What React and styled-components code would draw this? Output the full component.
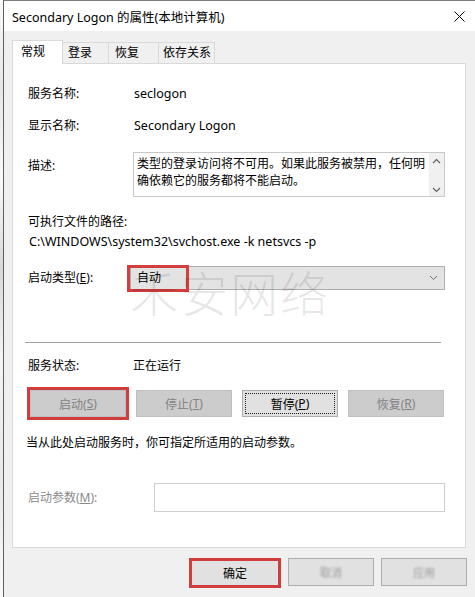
import React from 'react';
import styled, { createGlobalStyle } from 'styled-components';

const Global = createGlobalStyle`
  html, body { margin: 0; padding: 0; background: #fff; }
  body {
    font-family: "Noto Sans", "Noto Sans CJK SC", sans-serif;
    font-size: 12px;
    color: #000;
  }
  * { box-sizing: border-box; }
`;

const Screen = styled.div`
  width: 475px;
  height: 597px;
  overflow: hidden;
  display: flex;
  background: #fff;
`;

const Backdrop = styled.div`
  width: 3px;
  background: linear-gradient(180deg, #fafafa 0%, #e6e6e6 15%, #fafafa 30%, #d8d8d8 45%, #f4f4f4 60%, #e8e8e8 80%, #fafafa 100%);
`;

const Window = styled.div`
  flex: 1;
  display: flex;
  flex-direction: column;
  border-left: 1px solid #5e5e5e;
  border-top: 1px solid #7c7c7c;
  background: #f0f0f0;
`;

const TitleBar = styled.div`
  height: 30px;
  background: #fff;
  display: flex;
  align-items: center;
  justify-content: space-between;
  padding: 0 10px 0 8px;
  font-size: 12.5px;
  white-space: nowrap;
`;

const CloseIcon = styled.svg`
  width: 11px;
  height: 11px;
`;

const Body = styled.div`
  flex: 1;
  display: flex;
  flex-direction: column;
  padding: 9px 9px 0 8px;
  position: relative;
`;

const TabBar = styled.div`
  display: flex;
  align-items: flex-end;
  height: 24px;
  margin-bottom: -1px;
  position: relative;
  z-index: 1;
`;

const Tab = styled.div`
  width: ${p => p.$w}px;
  padding-left: ${p => p.$pl}px;
  height: ${p => (p.$active ? 24 : 22)}px;
  line-height: ${p => (p.$active ? 21 : 20)}px;
  background: ${p => (p.$active ? '#fff' : '#f0f0f0')};
  border: 1px solid #d9d9d9;
  border-bottom: ${p => (p.$active ? 'none' : '1px solid #d9d9d9')};
  margin-left: -1px;
  white-space: nowrap;
  &:first-child { margin-left: 0; }
`;

const Panel = styled.div`
  height: 485px;
  background: #fff;
  border: 1px solid #d9d9d9;
  padding: 22px 20px 0 15px;
  display: flex;
  flex-direction: column;
  position: relative;
`;

const Row = styled.div`
  display: grid;
  grid-template-columns: ${p => p.$labelW || 105}px 1fr;
  align-items: ${p => (p.$top ? 'start' : 'center')};
  margin-top: ${p => p.$mt || 0}px;
  min-height: 16px;
  line-height: 16px;
  white-space: nowrap;
`;

const Label = styled.div`
  color: ${p => (p.$disabled ? '#8a8a8a' : '#000')};
  padding-top: ${p => p.$pt || 0}px;
`;

const Text = styled.div`
  margin-top: ${p => p.$mt || 0}px;
  margin-left: ${p => p.$ml || 0}px;
  line-height: 16px;
  white-space: nowrap;
  font-size: ${p => (p.$latin ? '12.5px' : '12px')};
`;

const DescBox = styled.div`
  height: 45px;
  border: 1px solid #c8c8c8;
  display: flex;
`;

const DescText = styled.div`
  flex: 1;
  padding: 2px 0 0 3px;
  line-height: 17px;
  white-space: nowrap;
`;

const ScrollBar = styled.div`
  width: 15px;
  background: #f0f0f0;
  display: flex;
  flex-direction: column;
  justify-content: space-between;
  align-items: center;
  padding: 5px 0 3px;
`;

const Arrow = styled.svg`
  width: 9px;
  height: 6px;
`;

const Dropdown = styled.div`
  position: relative;
  height: 24px;
  background: #e3e3e3;
  border: 1px solid #adadad;
  display: flex;
  align-items: center;
  justify-content: space-between;
  padding: 0 6px 0 6px;
`;

const RedBox = styled.span`
  position: absolute;
  left: -4px;
  top: -2px;
  width: 62px;
  height: 27px;
  border: 3px solid #d33e3e;
`;

const Chevron = styled.svg`
  width: 9px;
  height: 6px;
`;

const Separator = styled.div`
  height: 1px;
  background: #a0a0a0;
  margin: ${p => p.$mt}px 4px 0 -3px;
`;

const ButtonGrid = styled.div`
  display: grid;
  grid-template-columns: repeat(4, 96px);
  column-gap: 10px;
  margin: 16px 0 0 2px;
`;

const Button = styled.div`
  height: ${p => p.$h || 27}px;
  width: ${p => (p.$w ? p.$w + 'px' : 'auto')};
  display: flex;
  align-items: center;
  justify-content: center;
  position: relative;
  white-space: nowrap;
  background: ${p => (p.$disabled ? '#cccccc' : '#e1e1e1')};
  border: ${p => (p.$red ? '3px solid #d13c3c' : p.$disabled ? '1px solid #bfbfbf' : '1px solid #adadad')};
  color: ${p => (p.$disabled ? '#838383' : '#000')};
  box-shadow: ${p => (p.$outerRed ? '0 0 0 3px #d13c3c' : 'none')};
  ${p => p.$focus && `
    &::after {
      content: '';
      position: absolute;
      inset: 2px;
      border: 1px dotted #222;
    }
  `}
`;

const Blurred = styled.span`
  color: #9a9a9a;
  filter: blur(0.8px);
  font-size: 11px;
`;

const ParamInput = styled.div`
  height: 29px;
  border: 1px solid #cfcfcf;
  background: #fff;
`;

const Watermark = styled.div`
  position: absolute;
  left: 117px;
  top: 203px;
  font-family: "Noto Sans CJK SC", sans-serif;
  font-weight: 300;
  font-size: 48px;
  line-height: 48px;
  letter-spacing: 2px;
  color: rgba(0, 0, 0, 0.11);
  pointer-events: none;
  white-space: nowrap;
`;

const BottomBar = styled.div`
  display: flex;
  justify-content: flex-end;
  gap: 7px;
  padding-top: 10px;
  margin-right: -1px;
`;

export default function App() {
  return (
    <>
      <Global />
      <Screen>
        <Backdrop />
        <Window>
          <TitleBar>
            <span>Secondary Logon 的属性(本地计算机)</span>
            <CloseIcon viewBox="0 0 11 11">
              <path d="M0.5 0.5 L10.5 10.5 M10.5 0.5 L0.5 10.5" stroke="#000" strokeWidth="1" fill="none" />
            </CloseIcon>
          </TitleBar>
          <Body>
            <TabBar>
              <Tab $active $w={51} $pl={8}>常规</Tab>
              <Tab $w={47} $pl={5}>登录</Tab>
              <Tab $w={51} $pl={6}>恢复</Tab>
              <Tab $w={57} $pl={4}>依存关系</Tab>
            </TabBar>
            <Panel>
              <Row>
                <Label>服务名称:</Label>
                <Text $ml={1} $latin>seclogon</Text>
              </Row>
              <Row $mt={16}>
                <Label>显示名称:</Label>
                <Text $ml={1} $latin>Secondary Logon</Text>
              </Row>
              <Row $mt={18} $top>
                <Label $pt={6}>描述:</Label>
                <DescBox>
                  <DescText>
                    类型的登录访问将不可用。如果此服务被禁用，任何明
                    <br />
                    确依赖它的服务都将不能启动。
                  </DescText>
                  <ScrollBar>
                    <Arrow viewBox="0 0 9 6">
                      <path d="M1 5 L4.5 1.5 L8 5" stroke="#606060" strokeWidth="1.2" fill="none" />
                    </Arrow>
                    <Arrow viewBox="0 0 9 6">
                      <path d="M1 1 L4.5 4.5 L8 1" stroke="#606060" strokeWidth="1.2" fill="none" />
                    </Arrow>
                  </ScrollBar>
                </DescBox>
              </Row>
              <Text $mt={17}>可执行文件的路径:</Text>
              <Text $mt={4} $ml={1} $latin>C:\WINDOWS\system32\svchost.exe -k netsvcs -p</Text>
              <Row $mt={16} $labelW={102}>
                <Label>启动类型(<u>E</u>):</Label>
                <Dropdown>
                  <span>自动</span>
                  <RedBox />
                  <Chevron viewBox="0 0 9 6">
                    <path d="M1 1 L4.5 4.5 L8 1" stroke="#707070" strokeWidth="1" fill="none" />
                  </Chevron>
                </Dropdown>
              </Row>
              <Separator $mt={52} />
              <Row $mt={15}>
                <Label>服务状态:</Label>
                <Text>正在运行</Text>
              </Row>
              <ButtonGrid>
                <Button $disabled $outerRed>启动(<u>S</u>)</Button>
                <Button $disabled>停止(<u>T</u>)</Button>
                <Button $focus>暂停(<u>P</u>)</Button>
                <Button $disabled>恢复(<u>R</u>)</Button>
              </ButtonGrid>
              <Text $mt={18} $ml={-2}>当从此处启动服务时，你可指定所适用的启动参数。</Text>
              <Row $mt={32} $labelW={126}>
                <Label $disabled>启动参数(<u>M</u>):</Label>
                <ParamInput />
              </Row>
              <Watermark>禾安网络</Watermark>
            </Panel>
            <BottomBar>
              <Button $red $w={92} $h={30}>确定</Button>
              <Button $w={86} $h={28}><Blurred>取消</Blurred></Button>
              <Button $w={86} $h={28}><Blurred>应用</Blurred></Button>
            </BottomBar>
          </Body>
        </Window>
      </Screen>
    </>
  );
}
